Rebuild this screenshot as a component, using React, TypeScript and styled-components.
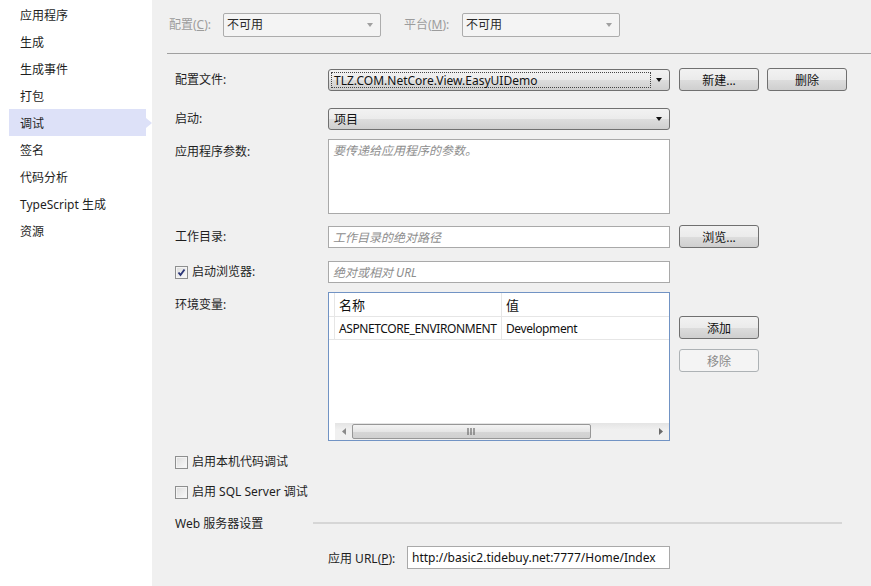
import React from 'react';
import styled, { createGlobalStyle, css } from 'styled-components';

const GlobalStyle = createGlobalStyle`
  html, body {
    margin: 0;
    padding: 0;
  }
  body {
    font-family: "Noto Sans", "Noto Sans CJK SC", sans-serif;
    font-size: 12px;
    color: #1e1e1e;
  }
  * {
    box-sizing: border-box;
  }
`;

const Shell = styled.div`
  display: flex;
  width: 871px;
  height: 586px;
  overflow: hidden;
  background: #f0f0f0;
`;

const Sidebar = styled.nav`
  width: 152px;
  flex: none;
  background: #fff;
  padding-top: 1px;
`;

const NavItem = styled.div<{ $active?: boolean }>`
  position: relative;
  display: flex;
  align-items: center;
  width: 137px;
  height: 27px;
  margin-left: 9px;
  padding-left: 11px;
  color: #1e1e1e;
  ${(p) =>
    p.$active &&
    css`
      background: #dde1f8;
      &::after {
        content: '';
        position: absolute;
        right: -6px;
        top: 50%;
        margin-top: -5px;
        border-left: 6px solid #dde1f8;
        border-top: 5px solid transparent;
        border-bottom: 5px solid transparent;
      }
    `}
`;

const Main = styled.main`
  flex: 1;
  display: flex;
  flex-direction: column;
  padding-left: 15px;
`;

const TopBar = styled.div`
  display: flex;
  align-items: flex-start;
  height: 54px;
  padding: 13px 0 0 2px;
  border-bottom: 1px solid #a0a0a0;
`;

const TopLabel = styled.span<{ $w: number }>`
  width: ${(p) => p.$w}px;
  flex: none;
  line-height: 24px;
  color: #9c9c9c;
  u {
    text-decoration: underline;
  }
`;

const DisabledCombo = styled.div`
  position: relative;
  width: 158px;
  height: 24px;
  margin-right: 23px;
  padding-left: 3px;
  line-height: 22px;
  border: 1px solid #acacac;
  border-radius: 2px;
  background: #f4f4f4;
  color: #2a2a2a;
`;

const Arrow = styled.span<{ $color: string }>`
  position: absolute;
  right: 7px;
  top: 50%;
  margin-top: -2px;
  border-top: 4px solid ${(p) => p.$color};
  border-left: 3.5px solid transparent;
  border-right: 3.5px solid transparent;
`;

const Form = styled.div`
  display: flex;
  flex-direction: column;
  padding-left: 8px;
`;

const Row = styled.div<{ $mt: number; $top?: boolean }>`
  display: flex;
  align-items: ${(p) => (p.$top ? 'flex-start' : 'center')};
  margin-top: ${(p) => p.$mt}px;
`;

const Label = styled.div<{ $pt?: number }>`
  display: flex;
  align-items: center;
  width: 153px;
  flex: none;
  line-height: 16px;
  padding-top: ${(p) => p.$pt ?? 0}px;
`;

const Combo = styled.div`
  position: relative;
  width: 342px;
  height: 22px;
  padding: 2px 18px 2px 2px;
  border: 1px solid #707070;
  border-radius: 3px;
  background: linear-gradient(#f2f2f2 0%, #ebebeb 50%, #dddddd 51%, #cfcfcf 100%);
`;

const ComboText = styled.div<{ $focus?: boolean }>`
  height: 16px;
  padding-left: 2px;
  line-height: 15px;
  color: #111;
  border: 1px dotted ${(p) => (p.$focus ? '#444' : 'transparent')};
`;

const TextBox = styled.div<{ $h?: number; $italic?: boolean }>`
  width: ${(p) => (p.$italic === false ? 263 : 342)}px;
  height: ${(p) => p.$h ?? 22}px;
  padding: 3px 4px;
  line-height: 15px;
  border: 1px solid #a9a9a9;
  background: #fff;
  color: ${(p) => (p.$italic === false ? '#111' : '#8e8e8e')};
  font-style: ${(p) => (p.$italic === false ? 'normal' : 'italic')};
  white-space: nowrap;
  overflow: hidden;
`;

const Side = styled.div<{ $column?: boolean }>`
  display: flex;
  flex-direction: ${(p) => (p.$column ? 'column' : 'row')};
  gap: ${(p) => (p.$column ? 10 : 8)}px;
  margin-left: 9px;
  padding-top: ${(p) => (p.$column ? 24 : 0)}px;
`;

const Button = styled.button`
  width: 80px;
  height: 23px;
  padding: 0;
  font: inherit;
  color: #111;
  border: 1px solid #707070;
  border-radius: 3px;
  background: linear-gradient(#f2f2f2 0%, #ebebeb 50%, #dddddd 51%, #cfcfcf 100%);
  &:disabled {
    color: #8a8a8a;
    border-color: #adb2b5;
    background: #f4f4f4;
  }
`;

const Table = styled.div`
  display: flex;
  flex-direction: column;
  width: 342px;
  height: 149px;
  border: 1px solid #7193c4;
  background: #fff;
`;

const TRow = styled.div<{ $header?: boolean }>`
  display: grid;
  grid-template-columns: 6px 167px 1fr;
  height: ${(p) => (p.$header ? 24 : 23)}px;
  border-bottom: 1px solid #e6e6e6;
  font-size: ${(p) => (p.$header ? 13 : 12)}px;
  letter-spacing: ${(p) => (p.$header ? 0 : -0.4)}px;
  color: #111;
`;

const TCell = styled.div`
  display: flex;
  align-items: center;
  padding-left: 4px;
  border-right: 1px solid #e6e6e6;
  white-space: nowrap;
  overflow: hidden;
  &:first-child {
    padding: 0;
  }
  &:last-child {
    border-right: none;
  }
`;

const TFill = styled.div`
  flex: 1;
`;

const HScroll = styled.div`
  display: flex;
  align-items: center;
  height: 17px;
  margin-left: 6px;
  background: linear-gradient(#e4e4e4, #f0f0f0 40%, #f0f0f0);
`;

const ScrollBtn = styled.div`
  width: 17px;
  height: 17px;
  flex: none;
  display: flex;
  align-items: center;
  justify-content: center;
`;

const Thumb = styled.div`
  width: 239px;
  height: 15px;
  display: flex;
  align-items: center;
  justify-content: center;
  border: 1px solid #979797;
  border-radius: 2px;
  background: linear-gradient(#f4f4f4 0%, #e6e6e6 50%, #d6d6d6 51%, #d0d0d0 100%);
`;

const ScrollSpace = styled.div`
  flex: 1;
`;

const CheckRow = styled.label`
  display: flex;
  align-items: center;
  gap: 4px;
  height: 16px;
  line-height: 16px;
`;

const Box = styled.span`
  width: 13px;
  height: 13px;
  flex: none;
  display: flex;
  align-items: center;
  justify-content: center;
  border: 1px solid #8e8f8f;
  background: linear-gradient(135deg, #dcdcdc, #fbfbfb);
  box-shadow: inset 0 0 0 1px #f4f4f4;
`;

const SectionHead = styled.div`
  display: flex;
  align-items: center;
  height: 16px;
`;

const SectionTitle = styled.span`
  width: 138px;
  flex: none;
`;

const SectionLine = styled.span`
  width: 529px;
  height: 2px;
  background: #d6d6d6;
`;

const UrlLabel = styled.span`
  width: 79px;
  flex: none;
  margin-left: 153px;
`;

const navItems = ['应用程序', '生成', '生成事件', '打包', '调试', '签名', '代码分析', 'TypeScript 生成', '资源'];

const Check: React.FC<{ checked?: boolean; children: React.ReactNode }> = ({ checked, children }) => (
  <CheckRow>
    <Box>
      {checked && (
        <svg width="9" height="9" viewBox="0 0 9 9">
          <path d="M1.5 4.5 L3.5 7 L7.5 1.5" fill="none" stroke="#2c3778" strokeWidth="1.9" />
        </svg>
      )}
    </Box>
    <span>{children}</span>
  </CheckRow>
);

const App: React.FC = () => (
  <>
    <GlobalStyle />
    <Shell>
      <Sidebar>
        {navItems.map((n) => (
          <NavItem key={n} $active={n === '调试'}>
            {n}
          </NavItem>
        ))}
      </Sidebar>

      <Main>
        <TopBar>
          <TopLabel $w={54}>
            配置(<u>C</u>):
          </TopLabel>
          <DisabledCombo>
            不可用
            <Arrow $color="#a0a0a0" />
          </DisabledCombo>
          <TopLabel $w={58}>
            平台(<u>M</u>):
          </TopLabel>
          <DisabledCombo>
            不可用
            <Arrow $color="#a0a0a0" />
          </DisabledCombo>
        </TopBar>

        <Form>
          <Row $mt={14}>
            <Label>配置文件:</Label>
            <Combo>
              <ComboText $focus>TLZ.COM.NetCore.View.EasyUIDemo</ComboText>
              <Arrow $color="#111" />
            </Combo>
            <Side>
              <Button>新建...</Button>
              <Button>删除</Button>
            </Side>
          </Row>

          <Row $mt={17}>
            <Label>启动:</Label>
            <Combo>
              <ComboText>项目</ComboText>
              <Arrow $color="#111" />
            </Combo>
          </Row>

          <Row $mt={9} $top>
            <Label $pt={5}>应用程序参数:</Label>
            <TextBox $h={75}>要传递给应用程序的参数。</TextBox>
          </Row>

          <Row $mt={11}>
            <Label>工作目录:</Label>
            <TextBox>工作目录的绝对路径</TextBox>
            <Side>
              <Button>浏览...</Button>
            </Side>
          </Row>

          <Row $mt={13}>
            <Label>
              <Check checked>启动浏览器:</Check>
            </Label>
            <TextBox>绝对或相对 URL</TextBox>
          </Row>

          <Row $mt={9} $top>
            <Label $pt={5}>环境变量:</Label>
            <Table>
              <TRow $header>
                <TCell />
                <TCell>名称</TCell>
                <TCell>值</TCell>
              </TRow>
              <TRow>
                <TCell />
                <TCell>ASPNETCORE_ENVIRONMENT</TCell>
                <TCell>Development</TCell>
              </TRow>
              <TFill />
              <HScroll>
                <ScrollBtn>
                  <svg width="4" height="7" viewBox="0 0 4 7">
                    <path d="M4 0 L0 3.5 L4 7 Z" fill="#8a8a8a" />
                  </svg>
                </ScrollBtn>
                <Thumb>
                  <svg width="9" height="7" viewBox="0 0 9 7">
                    <path d="M1 0 V7 M4 0 V7 M7 0 V7" stroke="#6a6a6a" strokeWidth="1.2" />
                  </svg>
                </Thumb>
                <ScrollSpace />
                <ScrollBtn>
                  <svg width="4" height="7" viewBox="0 0 4 7">
                    <path d="M0 0 L4 3.5 L0 7 Z" fill="#6a6a6a" />
                  </svg>
                </ScrollBtn>
              </HScroll>
            </Table>
            <Side $column>
              <Button>添加</Button>
              <Button disabled>移除</Button>
            </Side>
          </Row>

          <Row $mt={13}>
            <Check>启用本机代码调试</Check>
          </Row>
          <Row $mt={14}>
            <Check>启用 SQL Server 调试</Check>
          </Row>

          <Row $mt={15}>
            <SectionHead>
              <SectionTitle>Web 服务器设置</SectionTitle>
              <SectionLine />
            </SectionHead>
          </Row>

          <Row $mt={15}>
            <UrlLabel>
              应用 URL(<u>P</u>):
            </UrlLabel>
            <TextBox $italic={false} $h={23}>
              http://basic2.tidebuy.net:7777/Home/Index
            </TextBox>
          </Row>
        </Form>
      </Main>
    </Shell>
  </>
);

export default App;
